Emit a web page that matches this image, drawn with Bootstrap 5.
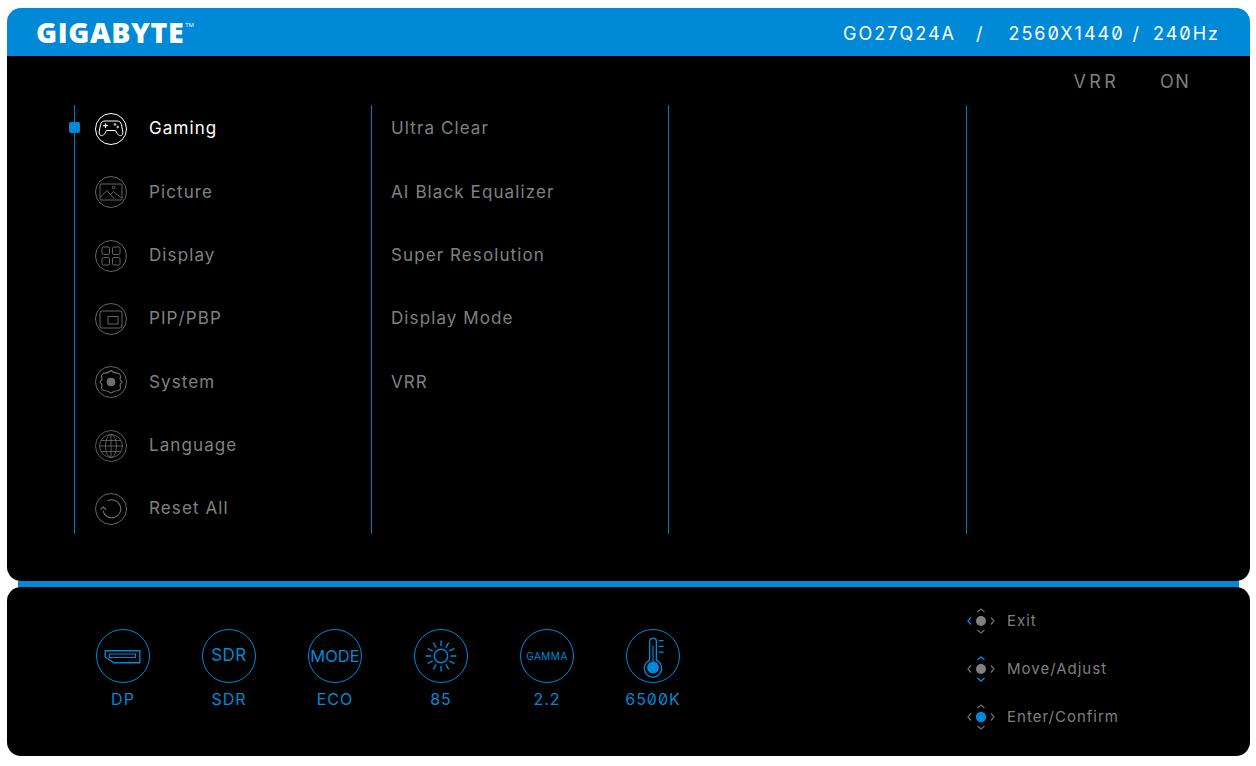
<!DOCTYPE html>
<html lang="en">
<head>
    <meta charset="UTF-8">
    <title>GIGABYTE OSD</title>
    <link href="https://cdn.jsdelivr.net/npm/bootstrap@5.3.3/dist/css/bootstrap.min.css" rel="stylesheet">
    <style>
        html, body { height: 100%; background: #fff; }
        body { font-family: Inter, "Liberation Sans", sans-serif; font-variant-numeric: slashed-zero; }
        .osd-wrap { width: 1256px; height: 766px; padding: 8px 6px 10px 7px; overflow: hidden; }
        .osd-head { height: 48px; background: #0089d6; border-radius: 14px 14px 0 0; padding: 0 30px 0 29px; color: #fff; }
        .osd-logo { font-family: "Open Sans", "Liberation Sans", sans-serif; font-weight: 800; font-size: 28.5px; letter-spacing: .6px; line-height: 1; }
        .osd-logo sup { font-size: 6px; font-weight: 400; top: -16px; left: 1px; letter-spacing: 0; }
        .osd-model { padding-top: 3px; font-size: 18px; letter-spacing: 2px; font-weight: 400; white-space: nowrap; }
        .osd-main { height: 525px; background: #000; border-radius: 0 0 14px 14px; }
        .osd-status { height: 49px; padding: 2px 60px 0 0; gap: 41px; color: #7f7f7f; font-size: 18px; letter-spacing: 1.3px; }
        .osd-vrr { letter-spacing: 3.3px; }
        .osd-cols { padding-left: 67px; }
        .osd-col { flex: 0 0 297px; height: 429px; border-left: 1px solid #0078bf; padding-left: 20px; position: relative; }
        .osd-col.sub { padding-left: 19px; }
        .osd-col.wide { flex-basis: 298px; }
        .osd-col.last { flex: 1 1 0; }
        .osd-list { gap: 17.33px; }
        .osd-item { height: 46px; gap: 22px; color: #808080; font-size: 17px; letter-spacing: 1.1px; }
        .osd-item span, .osd-item svg { margin-top: 2px; }
        .osd-item.active { color: #fff; }
        .osd-bullet { position: absolute; left: -6px; top: 17px; width: 11px; height: 11px; background: #0089d6; border-radius: 2px; }
        .osd-rule { height: 6px; margin: 0 11px; background: #0089d6; }
        .osd-foot { height: 169px; background: #000; border-radius: 14px; padding-left: 63px; padding-top: 42px; }
        .osd-cell { width: 106px; color: #0089d6; font-size: 16px; letter-spacing: 1px; }
        .osd-ring { width: 54px; height: 54px; border: 1.4px solid #0089d6; border-radius: 50%; font-size: 17px; letter-spacing: .5px; margin-bottom: 4px; }
        .osd-ring.tiny { font-size: 10px; letter-spacing: .5px; }
        .osd-ring.mode { font-size: 16.5px; letter-spacing: 0; }
        .osd-help { margin-left: 260px; margin-top: -23px; gap: 18px; color: #7f7f7f; font-size: 15px; letter-spacing: 1px; }
        .osd-help > div { height: 30px; gap: 11px; }
    </style>
</head>
<body>
    <div class="osd-wrap">
        <div class="osd-head d-flex align-items-center justify-content-between">
            <div class="osd-logo">GIGABYTE<sup>TM</sup></div>
            <div class="osd-model d-flex">
                <span class="me-3">GO27Q24A</span>
                <span class="ms-1 me-2">/</span>
                <span class="ms-3 me-1">2560X1440</span>
                <span class="ms-1 me-2">/</span>
                <span class="ms-1">240Hz</span>
            </div>
        </div>

        <div class="osd-main">
            <div class="osd-status d-flex align-items-center justify-content-end">
                <span class="osd-vrr">VRR</span><span>ON</span>
            </div>
            <div class="osd-cols d-flex">
                <div class="osd-col">
                    <span class="osd-bullet"></span>
                    <div class="osd-list d-flex flex-column">
                        <div class="osd-item active d-flex align-items-center">
                            <svg width="32" height="32" viewBox="0 0 32 32" fill="none" stroke="#fff" stroke-width="1">
                                <circle cx="16" cy="16" r="15.500"/>
                                <path d="M10 8h12c2.500 0 3.800 1.200 4.400 3.500l1.300 6.500c.5 2.800-.4 4.700-2.400 4.700-1.300 0-2.300-.9-3.200-2.400l-1.600-2.800h-9l-1.600 2.800c-.9 1.500-1.900 2.400-3.200 2.400-2 0-2.900-1.900-2.400-4.700l1.300-6.500c.6-2.300 1.900-3.500 4.400-3.500z"/>
                                <path d="M10.500 10.500v4.500M8.200 12.700h4.600" stroke-width="1.200"/>
                                <circle cx="20" cy="11.500" r=".8"/><circle cx="22.700" cy="14" r=".8"/>
                            </svg>
                            <span>Gaming</span>
                        </div>
                        <div class="osd-item d-flex align-items-center">
                            <svg width="32" height="32" viewBox="0 0 32 32" fill="none" stroke="#6f6f6f" stroke-width=".9">
                                <circle cx="16" cy="16" r="15.500"/>
                                <rect x="5" y="8" width="22" height="16" rx="1"/>
                                <path d="M5.500 21l6.500-6.500 7 8M15.500 18.500l3-2.800 8 6.300"/>
                                <circle cx="18.500" cy="11.500" r="1.300"/>
                            </svg>
                            <span>Picture</span>
                        </div>
                        <div class="osd-item d-flex align-items-center">
                            <svg width="32" height="32" viewBox="0 0 32 32" fill="none" stroke="#6f6f6f" stroke-width=".9">
                                <circle cx="16" cy="16" r="15.500"/>
                                <rect x="7" y="7" width="7.500" height="7.500" rx="1.500"/>
                                <rect x="17.500" y="7" width="7.500" height="7.500" rx="1.500"/>
                                <rect x="7" y="17.500" width="7.500" height="7.500" rx="1.500"/>
                                <rect x="17.500" y="17.500" width="7.500" height="7.500" rx="1.500"/>
                            </svg>
                            <span>Display</span>
                        </div>
                        <div class="osd-item d-flex align-items-center">
                            <svg width="32" height="32" viewBox="0 0 32 32" fill="none" stroke="#6f6f6f" stroke-width=".9">
                                <circle cx="16" cy="16" r="15.500"/>
                                <rect x="5" y="8" width="22" height="17" rx="2"/>
                                <rect x="13" y="13.500" width="10" height="7.500"/>
                            </svg>
                            <span>PIP/PBP</span>
                        </div>
                        <div class="osd-item d-flex align-items-center">
                            <svg width="32" height="32" viewBox="0 0 32 32" fill="none" stroke="#6f6f6f" stroke-width=".9">
                                <circle cx="16" cy="16" r="15.500"/>
                                <path d="M16 4.500c1.800 1.800 3.800 2.800 7.500 2.800 1.100.5 2 2 2.100 3.200-.8 1.900-.8 3.900 1.200 5 0 0 .3.600 0 1-2 1.200-2 3.100-1.200 5-.2 1.300-1 2.600-2.100 3-3.700 0-5.700 1-7.500 2.600-1.800-1.600-3.800-2.600-7.500-2.600-1.100-.4-1.900-1.700-2.100-3 .8-1.900.8-3.800-1.200-5-.3-.4 0-1 0-1 2-1.100 2-3.100 1.200-5 .1-1.200 1-2.700 2.100-3.200 3.700 0 5.700-1 7.500-2.800z" stroke-width="1.100"/>
                                <circle cx="16" cy="16" r="4" fill="#6f6f6f"/>
                            </svg>
                            <span>System</span>
                        </div>
                        <div class="osd-item d-flex align-items-center">
                            <svg width="32" height="32" viewBox="0 0 32 32" fill="none" stroke="#6f6f6f" stroke-width=".8">
                                <circle cx="16" cy="16" r="15.500"/>
                                <circle cx="16" cy="16" r="11.500"/>
                                <ellipse cx="16" cy="16" rx="5.500" ry="11.500"/>
                                <path d="M16 4.500v23M4.500 16h23M6 10.500h20M6 21.500h20"/>
                            </svg>
                            <span>Language</span>
                        </div>
                        <div class="osd-item d-flex align-items-center">
                            <svg width="32" height="32" viewBox="0 0 32 32" fill="none" stroke="#6f6f6f" stroke-width=".9">
                                <circle cx="16" cy="16" r="15.500"/>
                                <path d="M12.500 7.800a9 9 0 1 1-4.500 10.200" stroke-width="1.100"/>
                                <path d="M5.500 16.500l2.800-2.700 2.700 3" stroke-width="1.100"/>
                            </svg>
                            <span>Reset All</span>
                        </div>
                    </div>
                </div>
                <div class="osd-col sub">
                    <div class="osd-list d-flex flex-column">
                        <div class="osd-item d-flex align-items-center"><span>Ultra Clear</span></div>
                        <div class="osd-item d-flex align-items-center"><span>AI Black Equalizer</span></div>
                        <div class="osd-item d-flex align-items-center"><span>Super Resolution</span></div>
                        <div class="osd-item d-flex align-items-center"><span>Display Mode</span></div>
                        <div class="osd-item d-flex align-items-center"><span>VRR</span></div>
                    </div>
                </div>
                <div class="osd-col wide"></div>
                <div class="osd-col last"></div>
            </div>
        </div>

        <div class="osd-rule"></div>

        <div class="osd-foot d-flex">
            <div class="osd-cell d-flex flex-column align-items-center">
                <div class="osd-ring d-flex align-items-center justify-content-center">
                    <svg width="54" height="54" viewBox="0 0 54 54" fill="none" stroke="#0089d6" stroke-width="1.400">
                        <path d="M8.500 21.500h36v12.500h-27l-9-6z"/>
                        <path d="M13 25h27v3.500h-27z" stroke-width="1.100"/>
                    </svg>
                </div>
                <span>DP</span>
            </div>
            <div class="osd-cell d-flex flex-column align-items-center">
                <div class="osd-ring d-flex align-items-center justify-content-center">SDR</div>
                <span>SDR</span>
            </div>
            <div class="osd-cell d-flex flex-column align-items-center">
                <div class="osd-ring mode d-flex align-items-center justify-content-center">MODE</div>
                <span>ECO</span>
            </div>
            <div class="osd-cell d-flex flex-column align-items-center">
                <div class="osd-ring d-flex align-items-center justify-content-center">
                    <svg width="54" height="54" viewBox="0 0 54 54" fill="none" stroke="#0089d6" stroke-width="1.400">
                        <circle cx="27" cy="27" r="7"/>
                        <path d="M27 11v6M27 37v6M11 27h6M37 27h6M19 13.100l3 5.200M32 35.700l3 5.200M13.100 19l5.200 3M35.700 32l5.200 3M13.100 35l5.200-3M35.700 22l5.200-3M19 40.900l3-5.200M32 18.300l3-5.200"/>
                    </svg>
                </div>
                <span>85</span>
            </div>
            <div class="osd-cell d-flex flex-column align-items-center">
                <div class="osd-ring tiny d-flex align-items-center justify-content-center">GAMMA</div>
                <span>2.2</span>
            </div>
            <div class="osd-cell d-flex flex-column align-items-center">
                <div class="osd-ring d-flex align-items-center justify-content-center">
                    <svg width="54" height="54" viewBox="0 0 54 54" fill="none" stroke="#0089d6" stroke-width="1.400">
                        <path d="M23.500 12a3.500 3.500 0 0 1 7 0v19.500a9 9 0 1 1-7 0z"/>
                        <circle cx="27" cy="39" r="5.500" fill="#0089d6"/>
                        <path d="M27 36v-20" stroke-width="1.200"/>
                        <path d="M33 11h5M33 17h5M33 23h5" stroke-width="1.200"/>
                    </svg>
                </div>
                <span>6500K</span>
            </div>
            <div class="osd-help d-flex flex-column">
                <div class="d-flex align-items-center">
                    <svg width="30" height="30" viewBox="0 0 30 30" fill="none" stroke="#6f6f6f" stroke-width="1.200">
                        <path d="M11.500 6l3.500-3 3.500 3M11.500 24l3.500 3 3.500-3M25 11.500l3 3.500-3 3.500"/>
                        <path d="M5 11.500l-3 3.500 3 3.500" stroke="#0089d6" stroke-width="1.400"/>
                        <circle cx="15" cy="15" r="5" fill="#808080" stroke="none"/>
                    </svg>
                    <span>Exit</span>
                </div>
                <div class="d-flex align-items-center">
                    <svg width="30" height="30" viewBox="0 0 30 30" fill="none" stroke="#6f6f6f" stroke-width="1.200">
                        <path d="M5 11.500l-3 3.500 3 3.500M25 11.500l3 3.500-3 3.500"/>
                        <path d="M11.500 6l3.500-3 3.500 3M11.500 24l3.500 3 3.500-3" stroke="#0089d6" stroke-width="1.400"/>
                        <circle cx="15" cy="15" r="5" fill="#808080" stroke="none"/>
                    </svg>
                    <span>Move/Adjust</span>
                </div>
                <div class="d-flex align-items-center">
                    <svg width="30" height="30" viewBox="0 0 30 30" fill="none" stroke="#6f6f6f" stroke-width="1.200">
                        <path d="M5 11.500l-3 3.500 3 3.500M25 11.500l3 3.500-3 3.500M11.500 6l3.500-3 3.500 3M11.500 24l3.500 3 3.500-3"/>
                        <circle cx="15" cy="15" r="5.200" fill="#0089d6" stroke="none"/>
                    </svg>
                    <span>Enter/Confirm</span>
                </div>
            </div>
        </div>
    </div>
    <script src="https://cdn.jsdelivr.net/npm/bootstrap@5.3.3/dist/js/bootstrap.bundle.min.js"></script>
</body>
</html>
